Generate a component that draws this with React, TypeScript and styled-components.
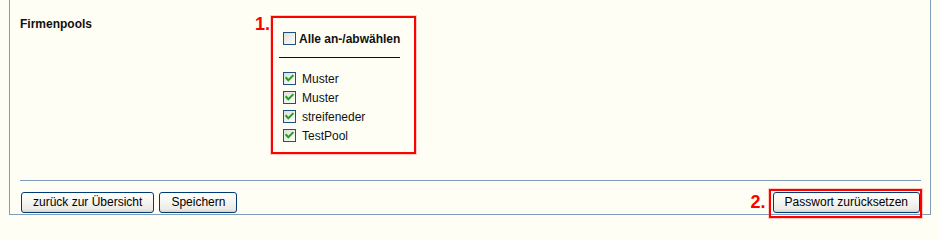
import React from 'react';
import styled, { createGlobalStyle } from 'styled-components';

const pools = ['Muster', 'Muster', 'streifeneder', 'TestPool'];

const GlobalStyle = createGlobalStyle`
  html, body {
    margin: 0;
    padding: 0;
    background: #fffef5;
  }
  body {
    font-family: 'Liberation Sans', Arial, sans-serif;
    font-size: 12px;
    color: #000;
    min-height: 223px;
  }
`;

const Panel = styled.div`
  margin-left: 9px;
  width: 922px;
  box-sizing: border-box;
  border: 1px solid #7f9db9;
  border-top: none;
  padding-bottom: 1px;
`;

const FieldRow = styled.div`
  display: grid;
  grid-template-columns: 251px auto;
  align-items: start;
  padding: 16px 0 0 10px;
`;

const FieldLabel = styled.div`
  font-weight: bold;
  font-size: 12px;
  line-height: 15px;
  margin-top: 1px;
  color: #111;
`;

const Marked = styled.div`
  position: relative;
  width: 145px;
  box-sizing: border-box;
  border: 2px solid #ff0000;
  box-shadow: 0 0 0 1px rgba(255, 110, 110, 0.35);
  padding: 11px 0 7px 6px;
`;

const Marker = styled.span<{ $top: number; $gap: number }>`
  position: absolute;
  top: ${p => p.$top}px;
  right: calc(100% + ${p => p.$gap}px);
  font-family: 'Liberation Sans', Arial, sans-serif;
  font-size: 18px;
  line-height: 18px;
  font-weight: bold;
  color: #ff0000;
  white-space: nowrap;
`;

const CheckRow = styled.label<{ $bold?: boolean }>`
  display: flex;
  align-items: center;
  height: 19px;
  font-size: 12px;
  font-weight: ${p => (p.$bold ? 'bold' : 'normal')};
  color: #111;
  white-space: nowrap;
  gap: ${p => (p.$bold ? 3 : 6)}px;
`;

const BoxIcon = styled.svg`
  flex: none;
  margin-left: 4px;
  display: block;
`;

const Rule = styled.div`
  width: 121px;
  height: 1px;
  background: #111;
  margin: 9px 0 11px;
`;

const Separator = styled.div`
  height: 0;
  border-top: 1px solid #7f9db9;
  margin: 26px 9px 0 10px;
`;

const ButtonBar = styled.div`
  display: flex;
  justify-content: space-between;
  align-items: center;
  padding: 11px 10px 0 11px;
`;

const ButtonGroup = styled.div`
  display: flex;
  gap: 5px;
`;

const Button = styled.button`
  display: block;
  height: 21px;
  margin: 0;
  padding: 0 11px;
  box-sizing: border-box;
  border: 1px solid #003c74;
  border-radius: 3px;
  background: linear-gradient(to bottom, #ffffff 0%, #f7f7f3 40%, #ecebe6 85%, #d8d4cb 100%);
  font-family: 'Liberation Sans', Arial, sans-serif;
  font-size: 12px;
  line-height: 19px;
  color: #000;
  cursor: pointer;
  white-space: nowrap;
`;

const FramedSlot = styled.div`
  position: relative;

  &::after {
    content: '';
    position: absolute;
    left: -4px;
    right: -2px;
    top: -3px;
    bottom: -5px;
    border: 2px solid #ff0000;
    box-shadow: 0 0 0 1px rgba(255, 110, 110, 0.35);
    pointer-events: none;
  }
`;

const CheckBox = ({ checked }: { checked: boolean }) => (
  <BoxIcon width="13" height="13" viewBox="0 0 13 13">
    <defs>
      <linearGradient id="cbfill" x1="0" y1="0" x2="1" y2="1">
        <stop offset="0" stopColor="#dcdcd7" />
        <stop offset="1" stopColor="#ffffff" />
      </linearGradient>
    </defs>
    <rect x="0.5" y="0.5" width="12" height="12" fill="url(#cbfill)" stroke="#1c5180" />
    {checked && (
      <polyline
        points="3.3,6 5.3,8.2 9.7,3.8"
        fill="none"
        stroke="#21a121"
        strokeWidth="2"
        strokeLinecap="square"
      />
    )}
  </BoxIcon>
);

export default function App() {
  return (
    <>
      <GlobalStyle />
      <Panel>
        <FieldRow>
          <FieldLabel>Firmenpools</FieldLabel>
          <Marked>
            <Marker $top={-3} $gap={3}>1.</Marker>
            <CheckRow $bold>
              <CheckBox checked={false} />
              Alle an-/abwählen
            </CheckRow>
            <Rule />
            {pools.map((name, i) => (
              <CheckRow key={i}>
                <CheckBox checked />
                {name}
              </CheckRow>
            ))}
          </Marked>
        </FieldRow>
        <Separator />
        <ButtonBar>
          <ButtonGroup>
            <Button>zurück zur Übersicht</Button>
            <Button>Speichern</Button>
          </ButtonGroup>
          <FramedSlot>
            <Marker $top={1} $gap={7}>2.</Marker>
            <Button>Passwort zurücksetzen</Button>
          </FramedSlot>
        </ButtonBar>
      </Panel>
    </>
  );
}
